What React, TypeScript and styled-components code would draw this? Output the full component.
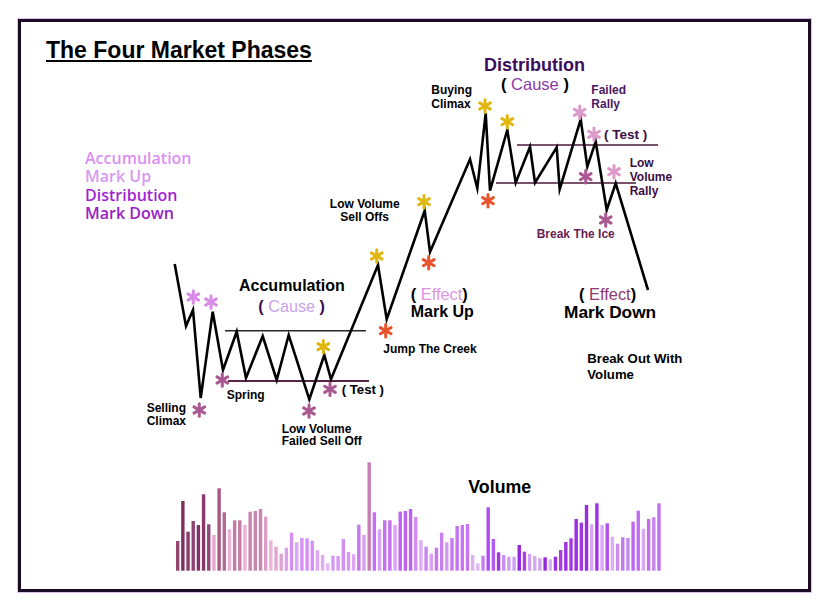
import React from 'react'
import styled, { createGlobalStyle } from 'styled-components'

const GlobalStyle = createGlobalStyle`
  html, body { margin:0; padding:0; background:#fff; }
  body { font-family:"Liberation Sans", Arial, sans-serif; }
`

// frame inner origin in page pixels
const OX = 21
const OY = 22

const Page = styled.div`
  width:828px;
  height:612px;
  padding:19px 0 0 18px;
  box-sizing:border-box;
`

const Frame = styled.div`
  position:relative;
  width:793px;
  height:573px;
  box-sizing:border-box;
  border:3px solid #1b0a22;
  box-shadow:0 0 0 1px #dcc0f2;
  padding:14px 0 0 25px;
  background:#fff;
`

const Title = styled.h1`
  margin:0;
  font-family:"Liberation Sans", Arial, sans-serif;
  font-size:23px;
  line-height:28px;
  font-weight:700;
  color:#000;
  text-decoration:underline;
  text-decoration-thickness:2px;
  text-underline-offset:2px;
`

const Legend = styled.ul`
  list-style:none;
  margin:85px 0 0 39px;
  padding:0;
  font-family:"Open Sans", sans-serif;
  font-size:16px;
  line-height:18.3px;
  font-weight:600;
`

const LegendItem = styled.li<{ $color:string }>`
  color:${p => p.$color};
  height:18.3px;
`

const Chart = styled.svg`
  position:absolute;
  left:0;
  top:0;
  overflow:visible;
`

const Label = styled.div<{ $x:number; $top:number; $size:number; $lh:number; $color:string; $center?:boolean }>`
  position:absolute;
  left:${p => p.$x}px;
  top:${p => p.$top}px;
  font-family:"Liberation Sans", Arial, sans-serif;
  font-weight:700;
  font-size:${p => p.$size}px;
  line-height:${p => p.$lh}px;
  color:${p => p.$color};
  white-space:nowrap;
  text-align:${p => (p.$center ? 'center' : 'left')};
  transform:${p => (p.$center ? 'translateX(-50%)' : 'none')};
`

const Word = styled.span<{ $color:string }>`
  color:${p => p.$color};
  font-weight:400;
`

type Note = {
  x:number
  by:number
  size:number
  lh:number
  color?:string
  center?:boolean
  content:React.ReactNode
}

const notes: Note[] = [
  { x:364.7, by:208.3, size:12, lh:13.4, center:true, content:<>Low Volume<br />Sell Offs</> },
  { x:484, by:71, size:18, lh:20, color:'#3b0c5c', content:'Distribution' },
  { x:501, by:90, size:16.5, lh:19, content:<>( <Word $color="#8b3aa8">Cause</Word> )</> },
  { x:431.3, by:95, size:12, lh:13.4, content:<>Buying<br />Climax</> },
  { x:591.3, by:95, size:12, lh:13.8, color:'#4a1760', content:<>Failed<br />Rally</> },
  { x:604, by:139.3, size:13.5, lh:15, color:'#3a0e44', content:'( Test )' },
  { x:629.7, by:166.7, size:12, lh:14.2, color:'#3a0e44', content:<>Low<br />Volume<br />Rally</> },
  { x:536.7, by:238.3, size:12, lh:14, color:'#6a1e52', content:'Break The Ice' },
  { x:239, by:291.7, size:16, lh:18, content:'Accumulation' },
  { x:258.3, by:311.7, size:16.2, lh:18, color:'#3a0e50', content:<>( <Word $color="#c9a3ea">Cause</Word> )</> },
  { x:410.7, by:299.3, size:16.4, lh:18, content:<>( <Word $color="#df94e2">Effect</Word>)</> },
  { x:410.7, by:317.3, size:16, lh:18, content:'Mark Up' },
  { x:383.3, by:353.3, size:12, lh:14, content:'Jump The Creek' },
  { x:226.7, by:399.3, size:12, lh:14, content:'Spring' },
  { x:146.7, by:412.7, size:12, lh:12.6, content:<>Selling<br />Climax</> },
  { x:341.7, by:394, size:13.2, lh:15, content:'( Test )' },
  { x:281.7, by:432.6, size:12, lh:12.2, content:<>Low Volume<br />Failed Sell Off</> },
  { x:579, by:299.3, size:16.4, lh:18, content:<>( <Word $color="#8c3a72">Effect</Word>)</> },
  { x:564, by:318.3, size:17.3, lh:19, content:'Mark Down' },
  { x:587.3, by:363.3, size:13.2, lh:16.7, content:<>Break Out With<br />Volume</> },
  { x:468.3, by:492.7, size:17.8, lh:20, content:'Volume' },
]

const pricePath: [number, number][] = [
  [174.7, 264], [186, 326], [193, 310], [200.7, 398], [212.7, 311.7], [223, 370],
  [236.7, 331.7], [246, 378], [262.7, 336], [276.7, 380], [288.7, 335], [309.3, 399.3],
  [324.3, 355], [331, 379.3], [378, 265], [386.7, 319.3], [424.7, 210.7], [430, 252],
  [470, 159.3], [477.3, 188.3], [485.7, 113.3], [490, 190.7], [507.3, 130], [515.7, 182.7],
  [530, 146.7], [535, 182.7], [556.7, 147.3], [559.7, 189.3], [580.7, 119.3], [587.3, 166.7],
  [595.7, 141.7], [606.7, 210], [615.7, 183.3], [648, 290],
]

const YELLOW = '#dfb70f'
const RED = '#e8532b'
const LAVENDER = '#d98be8'
const MAUVE = '#aa5891'
const PINK = '#dd9ac9'

const stars: [number, number, string][] = [
  [193.3, 297, LAVENDER], [211, 302, LAVENDER],
  [199.3, 410, MAUVE], [222.3, 380, MAUVE], [309, 411, MAUVE], [330, 389.3, MAUVE],
  [323.3, 346.7, YELLOW], [376.7, 256, YELLOW], [385.7, 330.7, RED],
  [424, 201.7, YELLOW], [428.7, 262.7, RED],
  [485, 106, YELLOW], [507.3, 121.7, YELLOW], [488, 200.7, RED],
  [579.7, 112.3, PINK], [594, 134.3, PINK], [585.7, 176.7, MAUVE], [614, 171.7, PINK],
  [605.7, 220, MAUVE],
]

const barTops = [
  541, 501, 531.7, 521, 525, 494.3, 524.3, 535, 488.3, 512.3, 529.3, 520.3, 520.3, 525, 511.7, 511,
  509, 516.7, 540.3, 546.7, 553.7, 547.7, 532.7, 542.3, 538, 538.3, 540.7, 550.3, 555, 563.3, 555.7, 556,
  539, 552, 554.3, 524.7, 535, 462.3, 512.3, 529.3, 520.3, 520.3, 525, 511.7, 511, 509, 517, 540.3,
  546.7, 553.7, 547.7, 532.7, 542.3, 538, 526, 525, 524, 555, 563.3, 555.7, 507.3, 539, 552.3, 555,
  556.7, 556.7, 545, 551.7, 554, 556, 558.3, 557.3, 559.3, 556.7, 550, 542, 538.3, 519, 522.7, 505,
  524.3, 503.3, 525, 523.3, 536.7, 543.7, 537.3, 538, 521.7, 510.7, 528.7, 519, 517.3, 503.3,
]

const barColors = [
  '#93446f', '#7e2f5e', '#8a3d6c', '#8f4272', '#7d3462', '#8a3a6a', '#914878', '#e4a6d0',
  '#a75880', '#b46a94', '#ebb3d8', '#c47ca6', '#c47ca6', '#eab3d6', '#c985b0', '#c985b0',
  '#c985b0', '#dd9dc9', '#e9b5da', '#e4a5d1', '#dca2d6', '#dca2ec', '#d590f5', '#dca4f6',
  '#d590f5', '#d590f5', '#d590f5', '#dfa6f5', '#e0aaf5', '#e7b8f7', '#d898f5', '#d898f5',
  '#d48ff2', '#d898f5', '#dea6f6', '#c878ef', '#d8a0f5', '#c77fb3', '#c46ef0', '#d79ff5',
  '#c46ef0', '#c46ef0', '#d8a4f5', '#bf62ee', '#bf62ee', '#bf62ee', '#d08df2', '#dfabf6',
  '#cb85f1', '#d8a0f5', '#c479f0', '#c77ef1', '#d49af4', '#c879f0', '#c575f0', '#c575f0',
  '#c575f0', '#dbb0f6', '#e0b8f7', '#c580f0', '#b04cf2', '#b35af0', '#9e36e0', '#c690f0',
  '#cda0f2', '#cda0f2', '#9526da', '#a940e4', '#cfa2f2', '#d3aaf3', '#cfa2f2', '#9628d8',
  '#d6b0f4', '#9a30dc', '#a83ee2', '#9f30e0', '#a43ae2', '#9a2edc', '#a036e0', '#9a2ce0',
  '#d6a8f4', '#a032e2', '#d6a8f4', '#b450ea', '#d9b0f5', '#c88ef2', '#c07aee', '#c58af0',
  '#bf68ee', '#c070ee', '#d8a8f5', '#c070ee', '#c585f0', '#c070ee',
]

const BAR_BASE = 570.7

const Star = ({ x, y, color }: { x:number; y:number; color:string }) => {
  const r = 6.2
  const arms = [90, 30, 150].map(a => {
    const rad = (a * Math.PI) / 180
    const dx = Math.cos(rad) * r
    const dy = Math.sin(rad) * r
    return <line key={a} x1={x - dx} y1={y - dy} x2={x + dx} y2={y + dy} />
  })
  return (
    <g stroke={color} strokeWidth={3} strokeLinecap="round">
      {arms}
    </g>
  )
}

const App = () => {
  return (
    <Page>
      <GlobalStyle />
      <Frame>
        <Title>The Four Market Phases</Title>
        <Legend>
          <LegendItem $color="#dc8ff3">Accumulation</LegendItem>
          <LegendItem $color="#d79af2">Mark Up</LegendItem>
          <LegendItem $color="#a21fd6">Distribution</LegendItem>
          <LegendItem $color="#9820c4">Mark Down</LegendItem>
        </Legend>

        <Chart width={787} height={567} viewBox={`${OX} ${OY} 787 567`}>
          {barTops.map((top, i) => (
            <rect
              key={i}
              x={176 + i * 5.175}
              y={top}
              width={3.4}
              height={BAR_BASE - top}
              fill={barColors[i]}
            />
          ))}

          <line x1={225} y1={330.7} x2={366} y2={330.7} stroke="#2b2430" strokeWidth={1.6} />
          <line x1={228} y1={381} x2={369} y2={381} stroke="#5a2448" strokeWidth={1.8} />
          <line x1={517} y1={145} x2={658} y2={145} stroke="#4a1838" strokeWidth={1.6} />
          <line x1={496} y1={183} x2={636} y2={183} stroke="#4a1838" strokeWidth={1.6} />

          <polyline
            points={pricePath.map(p => p.join(',')).join(' ')}
            fill="none"
            stroke="#000"
            strokeWidth={2.6}
            strokeLinejoin="miter"
            strokeMiterlimit={6}
          />

          {stars.map(([x, y, c], i) => (
            <Star key={i} x={x} y={y} color={c} />
          ))}
        </Chart>

        {notes.map((n, i) => (
          <Label
            key={i}
            $x={n.x - OX}
            $top={n.by - (n.lh / 2 + 0.3305 * n.size) - OY}
            $size={n.size}
            $lh={n.lh}
            $color={n.color ?? '#000'}
            $center={n.center}
          >
            {n.content}
          </Label>
        ))}
      </Frame>
    </Page>
  )
}

export default App
